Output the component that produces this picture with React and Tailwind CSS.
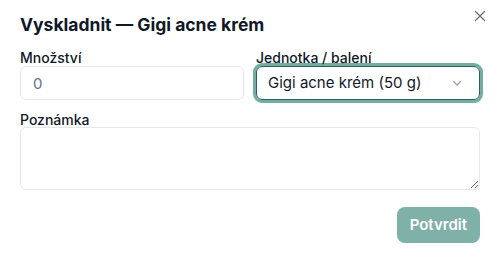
import { useState } from "react";

function App() {
  const [qty, setQty] = useState("");
  const [note, setNote] = useState("");

  return (
    <div
      className="relative w-[500px] h-[261px] bg-white px-5 pt-[14px]"
      style={{ fontFamily: "Inter, 'Noto Sans', sans-serif" }}
    >
      <button className="absolute right-[14px] top-[10px] text-gray-500">
        <svg width="12" height="12" viewBox="0 0 12 12" fill="none" stroke="currentColor" strokeWidth="1.4" strokeLinecap="round">
          <path d="M1.5 1.5l9 9M10.5 1.5l-9 9" />
        </svg>
      </button>

      <h2 className="text-[17.5px] font-bold text-gray-900 leading-[22px]">
        Vyskladnit — Gigi acne krém
      </h2>

      <div className="grid grid-cols-2 gap-3 mt-[15px]">
        <div>
          <label className="block text-[14px] font-medium text-gray-900 leading-[14px] mb-[1px]">
            Množství
          </label>
          <input
            type="text"
            value={qty}
            onChange={(e) => setQty(e.target.value)}
            placeholder="0"
            className="w-full h-[34px] px-3 rounded-md border border-gray-200 text-[15px] text-gray-800 placeholder:text-gray-500 outline-none"
          />
        </div>
        <div>
          <label className="block text-[14px] font-medium text-gray-900 leading-[14px] mb-[1px]">
            Jednotka / balení
          </label>
          <div className="h-[34px] flex items-center justify-between pl-[11px] pr-4 rounded-md border border-[#24645a] ring-[3px] ring-[#77aca1] text-[15px] text-gray-900">
            <span>Gigi acne krém (50 g)</span>
            <svg width="12" height="12" viewBox="0 0 12 12" fill="none" stroke="#9ca3af" strokeWidth="1.2" strokeLinecap="round" strokeLinejoin="round">
              <path d="M2.5 4.5L6 8l3.5-3.5" />
            </svg>
          </div>
        </div>
      </div>

      <label className="block text-[14px] font-medium text-gray-900 leading-[14px] mt-[13px]">
        Poznámka
      </label>
      <textarea
        value={note}
        onChange={(e) => setNote(e.target.value)}
        className="block w-full h-[63px] px-3 py-2 rounded-md border border-gray-200 text-[15px] outline-none"
      />

      <div className="flex justify-end mt-[17px]">
        <button className="h-[36px] px-[13px] rounded-lg bg-[#7fb1a8] text-white text-[15px] font-semibold">
          Potvrdit
        </button>
      </div>
    </div>
  );
}

export default App;
